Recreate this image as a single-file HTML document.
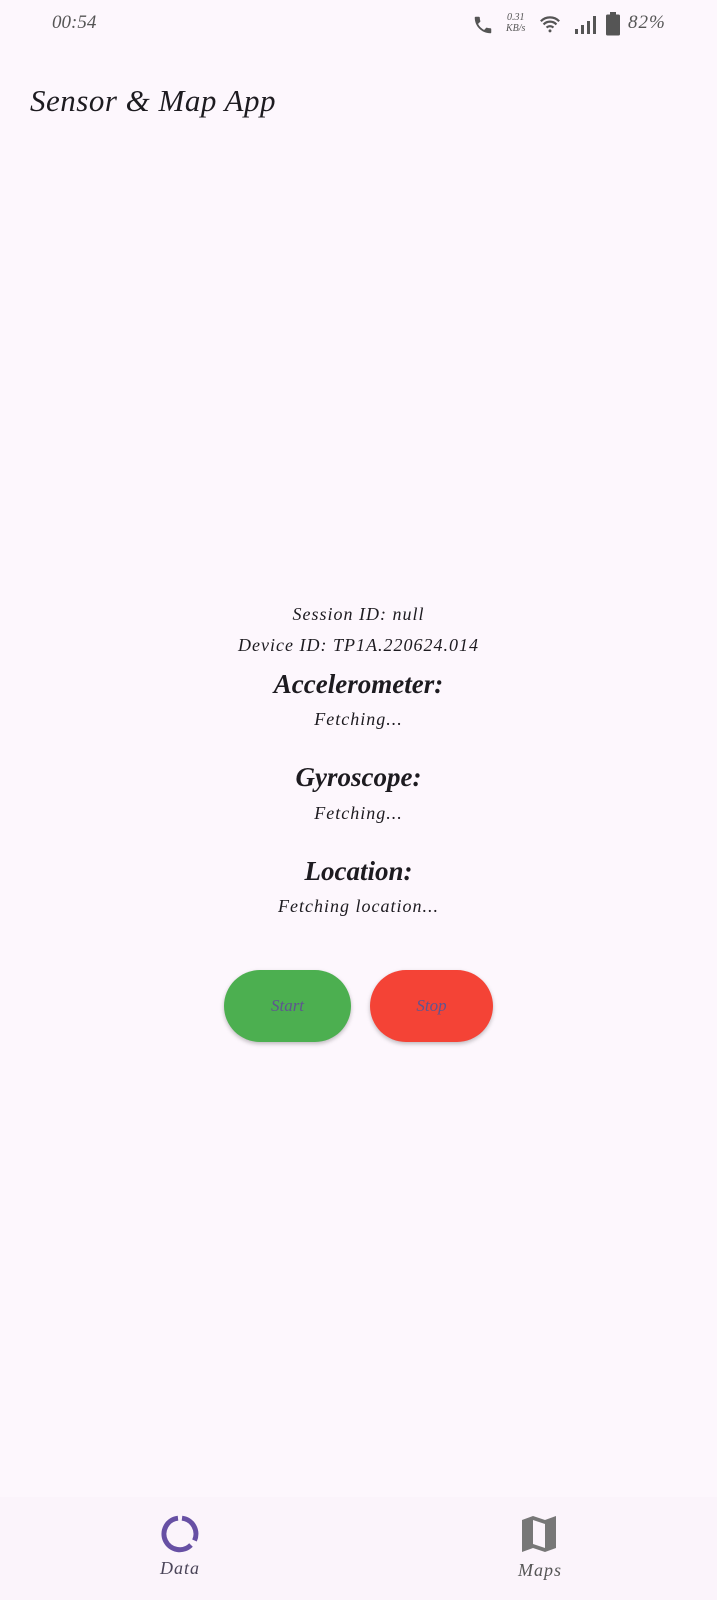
<!DOCTYPE html>
<html><head><meta charset="utf-8"><style>
body{margin:0;width:717px;height:1600px;background:#fdf7fd;font-family:"Liberation Serif",serif;font-style:italic;color:#1d1b20;position:relative;overflow:hidden}
.a{position:absolute;white-space:nowrap}
.c{position:absolute;left:0;width:717px;text-align:center;letter-spacing:1px}
.btn{position:absolute;top:970px;height:72px;border-radius:36px;box-shadow:0 2px 4px rgba(0,0,0,.25);font-size:17px;line-height:72px;text-align:center;color:#5f5590}
</style></head><body>
<div class="a" style="left:52px;top:12px;font-size:19px;color:#555">00:54</div>
<svg class="a" style="left:472px;top:14px" width="22" height="22" viewBox="0 0 24 24"><path fill="#555" d="M6.6 10.8c1.4 2.8 3.8 5.1 6.6 6.6l2.2-2.2c.3-.3.7-.4 1-.2 1.1.4 2.3.6 3.6.6.6 0 1 .4 1 1V20c0 .6-.4 1-1 1C10.6 21 3 13.4 3 4c0-.6.4-1 1-1h3.5c.6 0 1 .4 1 1 0 1.3.2 2.5.6 3.6.1.3 0 .7-.2 1z"/></svg>
<div class="a" style="left:506px;top:12px;font-size:10px;line-height:11px;color:#555;text-align:center">0.31<br>KB/s</div>
<svg class="a" style="left:539px;top:14px" width="22" height="20" viewBox="0 0 24 20"><path d="M2 7a14 14 0 0 1 20 0M5 10.5a9.5 9.5 0 0 1 14 0M8.3 14a5 5 0 0 1 7.4 0" stroke="#555" stroke-width="2.4" fill="none"/><circle cx="12" cy="17.5" r="1.6" fill="#555"/></svg>
<svg class="a" style="left:574px;top:15px" width="22" height="20"><rect x="1" y="14" width="3" height="5" fill="#555"/><rect x="7" y="10" width="3" height="9" fill="#555"/><rect x="13" y="6" width="3" height="13" fill="#555"/><rect x="19" y="1" width="3" height="18" fill="#555"/></svg>
<svg class="a" style="left:606px;top:12px" width="14" height="24"><rect x="4" y="0" width="6" height="3" fill="#555"/><rect x="0" y="2.5" width="14" height="21" rx="1.5" fill="#555"/></svg>
<div class="a" style="left:628px;top:12px;font-size:19px;color:#555;letter-spacing:1px">82%</div>
<div class="a" style="left:30px;top:83px;font-size:31px;color:#1d1b20;letter-spacing:0.5px">Sensor &amp; Map App</div>
<div class="c" style="top:604px;font-size:18px">Session ID: null</div>
<div class="c" style="top:635px;font-size:18px">Device ID: TP1A.220624.014</div>
<div class="c" style="top:669px;font-size:27px;font-weight:bold;letter-spacing:0">Accelerometer:</div>
<div class="c" style="top:709px;font-size:18px">Fetching...</div>
<div class="c" style="top:762px;font-size:27px;font-weight:bold;letter-spacing:0">Gyroscope:</div>
<div class="c" style="top:803px;font-size:18px">Fetching...</div>
<div class="c" style="top:856px;font-size:27px;font-weight:bold;letter-spacing:0">Location:</div>
<div class="c" style="top:896px;font-size:18px">Fetching location...</div>
<div class="btn" style="left:224px;width:127px;background:#4caf50">Start</div>
<div class="btn" style="left:370px;width:123px;background:#f44336">Stop</div>
<div class="a" style="left:0;top:1497px;width:717px;height:103px;background:#fbf4fb"></div>
<svg class="a" style="left:160px;top:1514px" width="40" height="40" viewBox="0 0 40 40"><path d="M18 4.2A15.8 15.8 0 1 0 31 31" fill="none" stroke="#6750a4" stroke-width="5"/><path d="M22 4.2A15.8 15.8 0 0 1 34.5 26.5" fill="none" stroke="#6750a4" stroke-width="5"/></svg>
<div class="a" style="left:160px;top:1558px;font-size:18px;color:#4a4458;letter-spacing:1px">Data</div>
<svg class="a" style="left:522px;top:1515px" width="34" height="38" viewBox="0 0 34 38"><path fill="#777" d="M0 5l11-4 12 4 11-4v32l-11 4-12-4-11 4z"/><path fill="#fbf4fb" d="M11 5l12 4v24l-12-4z"/></svg>
<div class="a" style="left:518px;top:1560px;font-size:18px;color:#555;letter-spacing:1px">Maps</div>
</body></html>
